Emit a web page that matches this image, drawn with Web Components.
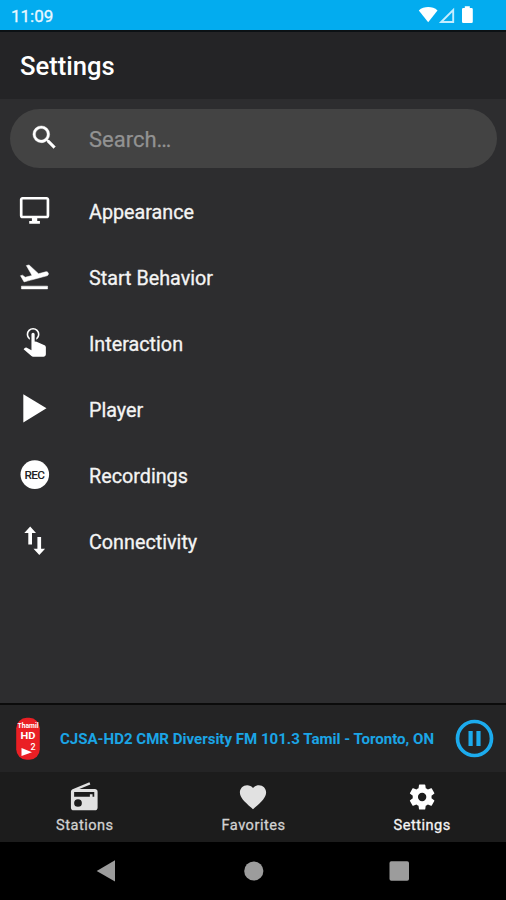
<!DOCTYPE html>
<html lang="en">
<head>
    <title>Settings</title>
    <meta charset="utf-8">
    <meta name="viewport" content="width=device-width, initial-scale=1">
    <style>
        body {
            margin: 0;
            background: #2d2d2f;
            font-family: Roboto, "Liberation Sans", sans-serif;
            color: #f4f4f4;
        }
    </style>
</head>
<body>

<template id="app-screen">
    <style>
        :host {
            display: flex;
            flex-direction: column;
            height: 900px;
            overflow: hidden;
        }

        main {
            flex: 1;
        }
    </style>
    <slot name="top"></slot>
    <main><slot></slot></main>
    <slot name="bottom"></slot>
</template>

<template id="status-bar">
    <style>
        :host {
            display: flex;
            justify-content: space-between;
            box-sizing: border-box;
            height: 32px;
            padding-left: 11px;
            background: #03acef;
            border-bottom: 2px solid #0c1114;
            font-size: 17px;
            line-height: 32px;
            color: #e9f8ff;
            -webkit-text-stroke: .3px;
        }

        svg {
            width: 90px;
            height: 30px;
        }
    </style>
    <slot></slot>
    <svg viewBox="416 0 90 30">
        <path fill="#fff" d="M418.800 10.400C424 6 432.500 6 437.500 10.400L428.200 22.300z"/>
        <path fill="none" stroke="#c4edff" stroke-width="1.900" d="M441.200 22L453.200 10V22z"/>
        <path fill="#fff" d="M464.800 8V6.300h5V8h1.700q1.300 0 1.300 1.300v12.400q0 1.300-1.300 1.300h-8.200q-1.300 0-1.300-1.300V9.300Q462 8 463.300 8z"/>
    </svg>
</template>

<template id="page-title">
    <style>
        :host {
            display: flex;
            align-items: center;
            box-sizing: border-box;
            height: 67px;
            padding: 0 20px;
            background: #242426;
            font-size: 25.6px;
            font-weight: 500;
            color: #fff;
        }
    </style>
    <slot></slot>
</template>

<template id="search-field">
    <style>
        :host {
            display: flex;
            align-items: center;
            height: 59px;
            margin: 10px 9px 10px 10px;
            border-radius: 30px;
            background: #434343;
            font-size: 22px;
            color: #929292;
            -webkit-text-stroke: .25px;
        }

        svg {
            width: 31px;
            height: 31px;
            margin: 0 29px 2px 19px;
            stroke: #fff;
            stroke-width: .3;
        }

        span {
            padding-top: 1px;
        }
    </style>
    <svg viewBox="0 0 24 24" fill="#fff"><path d="M15.500 14h-.79l-.28-.27A6.470 6.470 0 0 0 16 9.500 6.500 6.500 0 1 0 9.500 16c1.610 0 3.090-.59 4.230-1.570l.27.28v.79l5 4.990L20.490 19l-4.990-5zm-6 0C7.010 14 5 11.990 5 9.500S7.010 5 9.500 5 14 7.010 14 9.500 11.990 14 9.500 14z"/></svg>
    <span><slot></slot></span>
</template>

<template id="settings-item">
    <style>
        :host {
            display: flex;
            align-items: center;
            height: 66px;
            padding-left: 18px;
            font-size: 19.75px;
            -webkit-text-stroke: .3px;
        }

        svg {
            width: 33px;
            height: 33px;
            margin: 0 38px 1px 0;
            fill: #fff;
            -webkit-text-stroke: 0;
        }

        span {
            padding-top: 2px;
        }
    </style>
    <svg></svg>
    <span><slot></slot></span>
</template>

<template id="now-playing">
    <style>
        :host {
            display: flex;
            align-items: center;
            box-sizing: border-box;
            height: 69px;
            padding: 0 12px 0 15px;
            background: #242425;
            border-top: 2px solid #0b0b0b;
            font-size: 15.05px;
            font-weight: 700;
            color: #1ba5e6;
        }

        span {
            flex: 1;
            white-space: nowrap;
        }

        .logo {
            width: 26px;
            height: 44px;
            margin-right: 19px;
            overflow: visible;
        }

        .pause {
            width: 39px;
            height: 39px;
        }
    </style>
    <svg class="logo" viewBox="0 0 26 44" fill="#fff" font-family="Roboto, sans-serif" font-weight="700">
        <rect x="1.200" y=".8" width="23.600" height="42" rx="10.500" fill="#ea1f24"/>
        <text x="2.500" y="11.300" font-size="7" textLength="21" lengthAdjust="spacingAndGlyphs">Thamil</text>
        <text x="5.500" y="22" font-size="9.600" textLength="15" lengthAdjust="spacingAndGlyphs">HD</text>
        <text x="15.500" y="33" font-size="9" font-weight="500">2</text>
        <path d="M6.500 31L17 35.200 6.500 39z"/>
    </svg>
    <span><slot></slot></span>
    <svg class="pause" viewBox="0 0 39 39">
        <circle cx="19.500" cy="19.500" r="17" fill="none" stroke="#1cabed" stroke-width="3.700"/>
        <path fill="#1cabed" d="M13.500 12h4.200v15h-4.200zM21.400 12h4.200v15h-4.200z"/>
    </svg>
</template>

<template id="tab-bar">
    <style>
        :host {
            display: grid;
            grid-template-columns: repeat(3, 1fr);
            height: 70px;
            background: #1c1c1c;
        }
    </style>
    <slot></slot>
</template>

<template id="tab-item">
    <style>
        :host {
            display: flex;
            flex-direction: column;
            align-items: center;
            padding-top: 9px;
            font-size: 14.6px;
            line-height: 20px;
            letter-spacing: .5px;
            color: #d2d2d2;
            fill: #e1e1e1;
            -webkit-text-stroke: .3px;
        }

        :host([selected]) {
            color: #f4f4f4;
            fill: #fff;
        }

        svg {
            width: 32px;
            height: 32px;
            margin-bottom: 2px;
        }

        span {
            padding-left: 1px;
        }
    </style>
    <svg></svg>
    <span><slot></slot></span>
</template>

<template id="system-nav">
    <style>
        :host {
            display: block;
            height: 58px;
            background: #000;
        }

        svg {
            display: block;
            width: 506px;
            height: 58px;
            fill: #9c9c9c;
        }
    </style>
    <svg viewBox="0 0 506 58">
        <path d="M96.700 29L115 18.300V39.500z"/>
        <circle cx="253.800" cy="29" r="9.600"/>
        <rect x="389.500" y="19.300" width="19.500" height="19.500" rx="1.800"/>
    </svg>
</template>

<app-screen>
    <status-bar slot="top">11:09</status-bar>
    <page-title slot="top">Settings</page-title>

    <search-field>Search…</search-field>
    <settings-item icon="monitor">Appearance</settings-item>
    <settings-item icon="takeoff">Start Behavior</settings-item>
    <settings-item icon="tap">Interaction</settings-item>
    <settings-item icon="play">Player</settings-item>
    <settings-item icon="rec">Recordings</settings-item>
    <settings-item icon="arrows">Connectivity</settings-item>

    <now-playing slot="bottom">CJSA-HD2 CMR Diversity FM 101.3 Tamil - Toronto, ON</now-playing>
    <tab-bar slot="bottom">
        <tab-item icon="radio">Stations</tab-item>
        <tab-item icon="heart">Favorites</tab-item>
        <tab-item icon="gear" selected>Settings</tab-item>
    </tab-bar>
    <system-nav slot="bottom"></system-nav>
</app-screen>

<script type="module">
    // icon name -> [viewBox, markup]
    const icons = {
        monitor: ['-.4 -.2 24.7 24.7', '<path d="M21 2H3c-1.100 0-2 .9-2 2v12c0 1.100.9 2 2 2h7v2H8v2h8v-2h-2v-2h7c1.100 0 2-.9 2-2V4c0-1.100-.9-2-2-2zm0 14H3V4h18v12z"/>'],
        takeoff: ['0 0 24 24', '<path stroke="#fff" stroke-width=".4" d="M2.500 19h19v2h-19zM22.070 9.640c-.21-.8-1.040-1.280-1.840-1.060L14.920 10l-6.900-6.430-1.930.51 4.140 7.170-4.970 1.330-1.970-1.540-1.450.39 2.590 4.490s7.120-1.900 16.570-4.430c.81-.23 1.280-1.050 1.070-1.850z"/>'],
        tap: ['1.6 3.8 20.6 20.6', '<path d="M10,9A1,1 0 0,1 11,8A1,1 0 0,1 12,9V13.470L13.210,13.600L18.150,15.790C18.680,16.030 19,16.560 19,17.140V21.500C18.970,22.320 18.320,22.970 17.500,23H11C10.620,23 10.260,22.850 10,22.570L5.100,18.370L5.840,17.600C6.030,17.390 6.300,17.280 6.580,17.280H6.800L10,19V9M11,5A4,4 0 0,1 15,9C15,10.500 14.200,11.770 13,12.460V11.240C13.610,10.690 14,9.890 14,9A3,3 0 0,0 11,6A3,3 0 0,0 8,9C8,9.890 8.390,10.690 9,11.240V12.460C7.800,11.770 7,10.500 7,9A4,4 0 0,1 11,5Z"/>'],
        play: ['0 0 33 33', '<path d="M5.300 2.200L28.500 16.300 5.300 30.500z"/>'],
        rec: ['0 0 33 33', '<circle cx="16.800" cy="16.600" r="14.300"/><text x="6.500" y="20.900" font-size="11.800" font-weight="500" fill="#222" textLength="20.500">REC</text>'],
        arrows: ['0 0 33 33', '<path d="M12.200 2.600L18 9h-4v11.500h-3.700V9h-4zM19.400 13h3.700v11.800h4L21.300 31l-5.800-6.200h3.900z"/>'],
        radio: ['-.2 0 24 24', '<path d="M3.240 6.150C2.510 6.430 2 7.170 2 8v12c0 1.100.89 2 2 2h16c1.110 0 2-.9 2-2V8c0-1.110-.89-2-2-2H8.300l8.260-3.340L15.880 1 3.240 6.150zM7.300 19.400a2.900 2.900 0 1 1 0-5.800 2.900 2.900 0 0 1 0 5.800zM19.500 11.800h-1.300V10h-2v1.800H4.400V8.300h15.100z"/>'],
        heart: ['-.2 -.2 24.400 24.400', '<path d="M12 21.350l-1.450-1.320C5.400 15.360 2 12.280 2 8.500 2 5.420 4.420 3 7.500 3c1.740 0 3.410.81 4.500 2.090C13.090 3.810 14.760 3 16.500 3 19.580 3 22 5.420 22 8.500c0 3.780-3.400 6.860-8.550 11.540L12 21.350z"/>'],
        gear: ['-.3 -.2 24.400 24.400', '<path d="M19.140 12.940c.04-.3.06-.61.06-.94 0-.32-.02-.64-.07-.94l2.030-1.580c.18-.14.23-.41.12-.61l-1.920-3.320c-.12-.22-.37-.29-.59-.22l-2.390.96c-.5-.38-1.030-.7-1.620-.94l-.36-2.540c-.04-.24-.24-.41-.48-.41h-3.840c-.24 0-.43.17-.47.41l-.36 2.540c-.59.24-1.130.57-1.620.94l-2.390-.96c-.22-.08-.47 0-.59.22L2.740 8.870c-.12.21-.08.47.12.61l2.030 1.580c-.05.3-.09.63-.09.94s.02.64.07.94l-2.030 1.580c-.18.14-.23.41-.12.61l1.920 3.320c.12.22.37.29.59.22l2.390-.96c.5.38 1.030.7 1.620.94l.36 2.540c.05.24.24.41.48.41h3.840c.24 0 .44-.17.47-.41l.36-2.540c.59-.24 1.130-.56 1.620-.94l2.390.96c.22.08.47 0 .59-.22l1.920-3.320c.12-.22.07-.47-.12-.61l-2.010-1.580zM12 15.200a3.200 3.200 0 1 1 0-6.400 3.200 3.200 0 0 1 0 6.400z"/>']
    }

    class TemplateElement extends HTMLElement {

        constructor() {
            super()
            this.attachShadow({mode: 'open'})
            const template = document.getElementById(this.localName)
            this.shadowRoot.appendChild(template.content.cloneNode(true))
        }
    }

    class IconElement extends TemplateElement {

        connectedCallback() {
            const [viewBox, markup] = icons[this.getAttribute('icon')]
            const svg = this.shadowRoot.querySelector('svg')
            svg.setAttribute('viewBox', viewBox)
            svg.innerHTML = markup
        }
    }

    customElements.define('app-screen', class extends TemplateElement {})
    customElements.define('status-bar', class extends TemplateElement {})
    customElements.define('page-title', class extends TemplateElement {})
    customElements.define('search-field', class extends TemplateElement {})
    customElements.define('settings-item', class extends IconElement {})
    customElements.define('now-playing', class extends TemplateElement {})
    customElements.define('tab-bar', class extends TemplateElement {})
    customElements.define('tab-item', class extends IconElement {})
    customElements.define('system-nav', class extends TemplateElement {})
</script>
</body>
</html>
